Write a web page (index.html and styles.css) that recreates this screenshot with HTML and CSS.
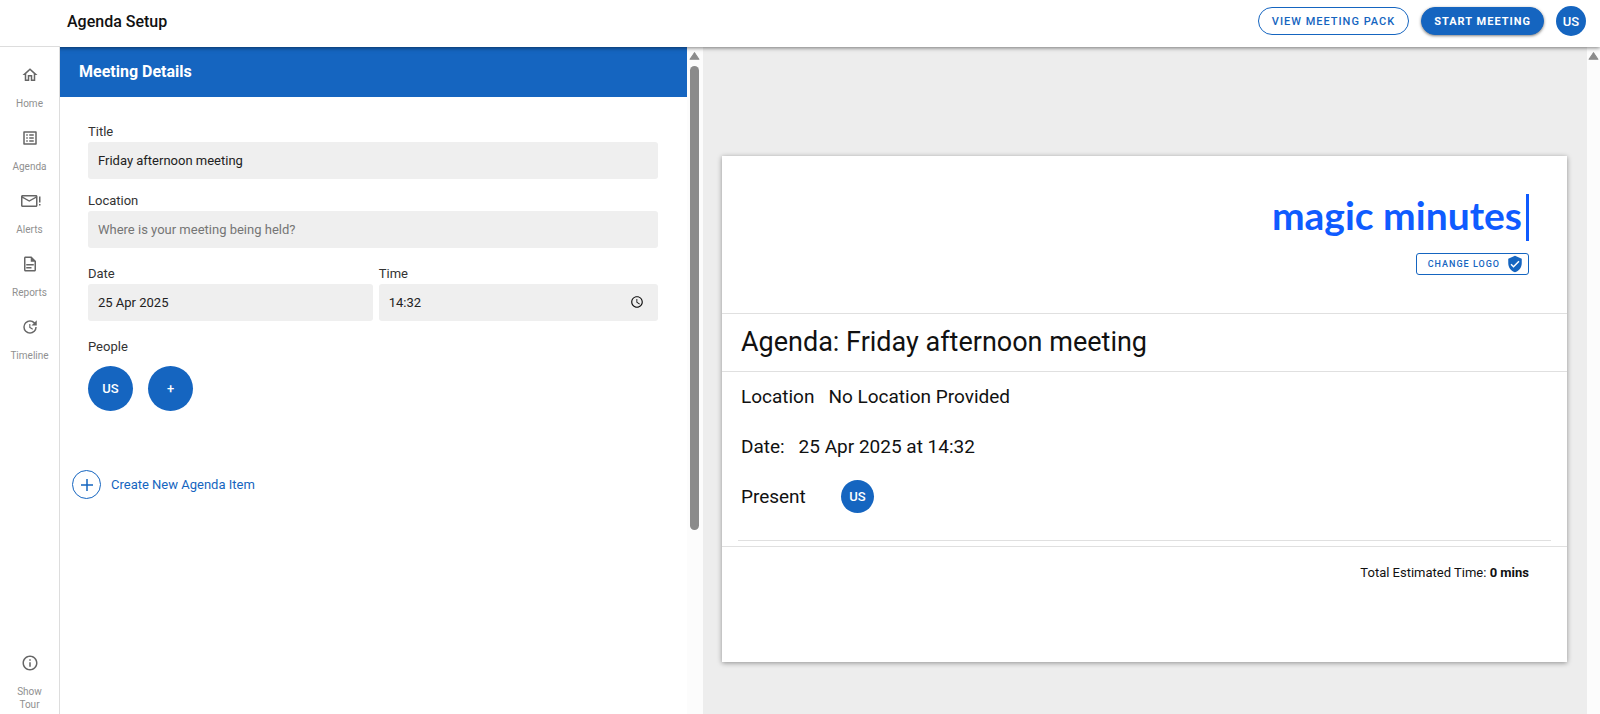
FILE: index.html
```html
<!DOCTYPE html>
<html lang="en">
<head>
  <meta charset="UTF-8">
  <meta name="viewport" content="width=device-width, initial-scale=1">
  <title>Agenda Setup</title>
  <link rel="stylesheet" href="styles.css">
</head>
<body>
  <header class="topbar">
    <h1>Agenda Setup</h1>
    <button class="btn btn-outline">View Meeting Pack</button>
    <button class="btn btn-primary">Start Meeting</button>
    <button class="avatar avatar-small">US</button>
  </header>

  <div class="layout">
    <nav class="sidebar">
      <a href="#">
        <svg viewBox="0 0 24 24"><path d="M12 5.69l5 4.5V18h-2v-6H9v6H7v-7.810l5-4.500M12 3L2 12h3v8h6v-6h2v6h6v-8h3L12 3z"/></svg>
        <span>Home</span>
      </a>
      <a href="#">
        <svg viewBox="0 0 24 24"><path d="M11 7h6v2h-6V7zm0 4h6v2h-6v-2zm0 4h6v2h-6v-2zM7 7h2v2H7V7zm0 4h2v2H7v-2zm0 4h2v2H7v-2zM20.100 3H3.900c-.5 0-.9.4-.9.9v16.200c0 .4.4.9.9.9h16.200c.4 0 .9-.5.9-.9V3.900c0-.5-.5-.9-.9-.9zM19 19H5V5h14v14z"/></svg>
        <span>Agenda</span>
      </a>
      <a href="#">
        <svg class="wide" viewBox="0 0 28 24"><path d="M22 4H4c-1.100 0-2 .9-2 2v12c0 1.100.9 2 2 2h18c1.100 0 2-.9 2-2V6c0-1.100-.9-2-2-2zm0 14H4V8l9 5 9-5v10zm-9-7L4 6h18l-9 5zM26 6h2v8h-2zM26 16h2v2h-2z"/></svg>
        <span>Alerts</span>
      </a>
      <a href="#">
        <svg viewBox="0 0 24 24"><path d="M7 16h7v2H7zm0-4h10v2H7zm7-10H6c-1.100 0-2 .9-2 2v16c0 1.100.89 2 1.990 2H18c1.100 0 2-.9 2-2V8l-6-6zm4 18H6V4h7v5h5v11z"/></svg>
        <span>Reports</span>
      </a>
      <a href="#">
        <svg viewBox="0 0 24 24"><path d="M11 8v5l4.250 2.520.77-1.280-3.520-2.090V8H11zm10 2V3l-2.640 2.640C16.740 4.010 14.490 3 12 3a9 9 0 1 0 9 9h-2c0 3.860-3.140 7-7 7s-7-3.140-7-7 3.140-7 7-7c1.930 0 3.680.79 4.950 2.050L14 10h7z"/></svg>
        <span>Timeline</span>
      </a>
      <a href="#" class="tour">
        <svg viewBox="0 0 24 24"><path d="M11 7h2v2h-2zm0 4h2v6h-2zm1-9C6.480 2 2 6.480 2 12s4.480 10 10 10 10-4.480 10-10S17.520 2 12 2zm0 18c-4.410 0-8-3.590-8-8s3.590-8 8-8 8 3.590 8 8-3.590 8-8 8z"/></svg>
        <span>Show<br>Tour</span>
      </a>
    </nav>

    <section class="editor">
      <div class="editor-content">
        <h2 class="panel-title">Meeting Details</h2>
        <form class="details">
          <div class="field">
            <label for="title">Title</label>
            <input type="text" id="title" value="Friday afternoon meeting">
          </div>
          <div class="field">
            <label for="location">Location</label>
            <input type="text" id="location" placeholder="Where is your meeting being held?">
          </div>
          <div class="field-row">
            <div class="field date">
              <label for="date">Date</label>
              <input type="text" id="date" value="25 Apr 2025">
            </div>
            <div class="field time">
              <label for="time">Time</label>
              <input type="text" id="time" value="14:32">
              <svg viewBox="0 0 24 24"><path d="M12 2C6.500 2 2 6.500 2 12s4.500 10 10 10 10-4.500 10-10S17.500 2 12 2zm0 18c-4.400 0-8-3.600-8-8s3.600-8 8-8 8 3.600 8 8-3.600 8-8 8zm.5-13H11v6l5.200 3.200.8-1.300-4.500-2.700V7z"/></svg>
            </div>
          </div>
          <div class="people">
            <p>People</p>
            <div class="people-list">
              <button type="button" class="avatar">US</button>
              <button type="button" class="avatar" aria-label="Add person">+</button>
            </div>
          </div>
        </form>
        <button class="create-item">
          <span class="circle"><svg viewBox="0 0 12 12"><path d="M6 0v12M0 6h12"/></svg></span>
          Create New Agenda Item
        </button>
      </div>
      <div class="scrollbar">
        <svg viewBox="0 0 10 8"><path d="M5 1L9 7H1z"/></svg>
        <div class="thumb"></div>
      </div>
    </section>

    <main class="preview">
      <div class="preview-content">
        <article class="page">
          <div class="page-logo">
            <div class="logo">magic minutes</div>
            <button class="change-logo">
              Change Logo
              <svg viewBox="0 0 24 24"><path d="M12 1L3 5v6c0 5.550 3.840 10.740 9 12 5.160-1.260 9-6.450 9-12V5l-9-4zm-2 16l-4-4 1.410-1.410L10 14.170l6.590-6.590L18 9l-8 8z"/></svg>
            </button>
          </div>
          <h2 class="page-title">Agenda: Friday afternoon meeting</h2>
          <div class="page-info">
            <p><span>Location</span><span>No Location Provided</span></p>
            <p><span>Date:</span><span>25 Apr 2025 at 14:32</span></p>
            <p class="present"><span>Present</span><span class="avatar avatar-medium">US</span></p>
            <hr>
          </div>
          <div class="page-footer">Total Estimated Time: <b>0 mins</b></div>
        </article>
      </div>
      <div class="scrollbar">
        <svg viewBox="0 0 10 8"><path d="M5 1L9 7H1z"/></svg>
      </div>
    </main>
  </div>
</body>
</html>
```
FILE: styles.css
```css
* {
  box-sizing: border-box;
}

body {
  margin: 0;
  height: 100vh;
  display: flex;
  flex-direction: column;
  overflow: hidden;
  font-family: Roboto, sans-serif;
  font-size: 13px;
  color: #333;
  background: #fff;
}

h1, h2, p {
  margin: 0;
}

button, input {
  font-family: inherit;
}

button {
  cursor: pointer;
}

/* top bar */
.topbar {
  display: flex;
  align-items: center;
  gap: 12px;
  height: 47px;
  padding: 0 14px 5px 67px;
  background: #fff;
  box-shadow: 0 1px 4px rgba(0, 0, 0, 0.5);
  position: relative;
  z-index: 1;
}

.topbar h1 {
  flex: 1;
  font-size: 16px;
  font-weight: 500;
  color: #111;
}

.btn {
  height: 28px;
  padding: 0 13px;
  border: 1px solid #1565c0;
  border-radius: 14px;
  font-size: 11px;
  font-weight: 500;
  letter-spacing: 1px;
  text-transform: uppercase;
}

.btn-outline {
  background: #fff;
  color: #1565c0;
}

.btn-primary {
  padding: 0 12px;
  background: #1565c0;
  color: #fff;
  font-weight: 700;
  box-shadow: 0 1px 3px rgba(0, 0, 0, 0.5);
}

.avatar {
  display: flex;
  align-items: center;
  justify-content: center;
  width: 45px;
  height: 45px;
  padding: 0;
  border: none;
  border-radius: 50%;
  background: #1565c0;
  color: #fff;
  font-size: 13px;
  font-weight: 500;
}

.avatar-small {
  width: 30px;
  height: 30px;
}

.avatar-medium {
  width: 33px;
  height: 33px;
}

.layout {
  flex: 1;
  display: flex;
  min-height: 0;
}

/* left navigation */
.sidebar {
  display: flex;
  flex-direction: column;
  gap: 19px;
  width: 60px;
  padding: 19px 0 3px;
  background: #fff;
  border-right: 1px solid #ddd;
  box-shadow: 0 -1px #ddd;
  position: relative;
  z-index: 2;
}

.sidebar a {
  display: flex;
  flex-direction: column;
  align-items: center;
  gap: 13px;
  color: #909090;
  font-size: 10px;
  line-height: 13px;
  text-align: center;
  text-decoration: none;
}

.sidebar svg {
  width: 18px;
  height: 18px;
  fill: #666;
}

.sidebar .wide {
  width: 22px;
}

.sidebar .tour {
  margin-top: auto;
}

/* meeting form */
.editor {
  flex: 43;
  display: flex;
  min-width: 0;
}

.editor-content {
  flex: 1;
}

.panel-title {
  padding: 0 19px;
  background: #1565c0;
  color: #fff;
  font-size: 16px;
  font-weight: 700;
  line-height: 50px;
}

.details {
  display: flex;
  flex-direction: column;
  gap: 13px;
  padding: 26px 29px 0 28px;
}

.field {
  display: flex;
  flex-direction: column;
  gap: 1px;
  line-height: 18px;
}

.field input {
  width: 100%;
  height: 37px;
  padding: 0 10px;
  border: none;
  border-radius: 3px;
  background: #efefef;
  color: #222;
  font-size: 13px;
}

.field input::placeholder {
  color: #757575;
}

.field-row {
  display: flex;
  gap: 6px;
  margin: 4px 0;
}

.date {
  flex: 51;
}

.time {
  flex: 50;
  position: relative;
}

.time svg {
  position: absolute;
  right: 14px;
  bottom: 12px;
  width: 14px;
  height: 14px;
  fill: #111;
}

.people {
  line-height: 18px;
}

.people-list {
  display: flex;
  gap: 15px;
  margin-top: 10px;
}

.create-item {
  display: flex;
  align-items: center;
  gap: 10px;
  margin: 59px 0 0 12px;
  padding: 0;
  border: none;
  background: none;
  color: #1565c0;
  font-size: 13px;
}

.circle {
  display: flex;
  align-items: center;
  justify-content: center;
  width: 29px;
  height: 29px;
  border: 1px solid #1565c0;
  border-radius: 50%;
}

.circle svg {
  width: 12px;
  height: 12px;
  stroke: #1565c0;
  stroke-width: 1.5;
}

/* scroll bars */
.scrollbar {
  display: flex;
  flex-direction: column;
  align-items: center;
  gap: 5px;
  width: 16px;
  padding-top: 4px;
  background: #fcfcfc;
}

.scrollbar svg {
  width: 11px;
  height: 10px;
  fill: #8b8b8b;
  stroke: #8b8b8b;
  stroke-width: 1;
  stroke-linejoin: round;
}

.thumb {
  width: 9px;
  height: 70%;
  border-radius: 5px;
  background: #8b8b8b;
}

/* agenda preview */
.preview {
  flex: 60;
  display: flex;
  min-width: 0;
  background: #ededed;
}

.preview .scrollbar {
  width: 13px;
}

.preview-content {
  flex: 1;
  padding: 109px 20px 0 19px;
}

.page {
  background: #fff;
  color: #111;
  box-shadow: 0 1px 5px rgba(0, 0, 0, 0.4);
}

.page-logo {
  display: flex;
  flex-direction: column;
  align-items: flex-end;
  gap: 12px;
  padding: 38px 38px 38px 19px;
}

.logo {
  padding: 0 4px 4px 0;
  border-right: 3px solid #0f5bff;
  color: #0f5bff;
  font-family: Lato, sans-serif;
  font-size: 39px;
  font-weight: 700;
  line-height: 43px;
}

.change-logo {
  display: flex;
  align-items: center;
  gap: 6px;
  height: 22px;
  padding: 0 4px 0 11px;
  border: 1px solid #1565c0;
  border-radius: 3px;
  background: #fff;
  color: #1565c0;
  font-size: 9px;
  font-weight: 500;
  letter-spacing: 1px;
  text-transform: uppercase;
}

.change-logo svg {
  width: 18px;
  height: 18px;
  fill: #1565c0;
}

.page-title {
  padding: 0 19px;
  border-top: 1px solid #e0e0e0;
  border-bottom: 1px solid #e0e0e0;
  font-size: 27px;
  font-weight: 400;
  line-height: 57px;
}

.page-info {
  padding: 8px 16px 5px;
  border-bottom: 1px solid #e0e0e0;
  font-size: 19px;
}

.page-info p {
  display: flex;
  gap: 14px;
  padding: 0 3px;
  margin-bottom: 16px;
  line-height: 34px;
}

.page-info .present {
  gap: 35px;
  margin-bottom: 26px;
}

.page-info hr {
  margin: 0;
  border: none;
  border-top: 1px solid #e0e0e0;
}

.page-footer {
  padding: 17px 38px 80px;
  font-size: 13px;
  line-height: 18px;
  text-align: right;
}
```
